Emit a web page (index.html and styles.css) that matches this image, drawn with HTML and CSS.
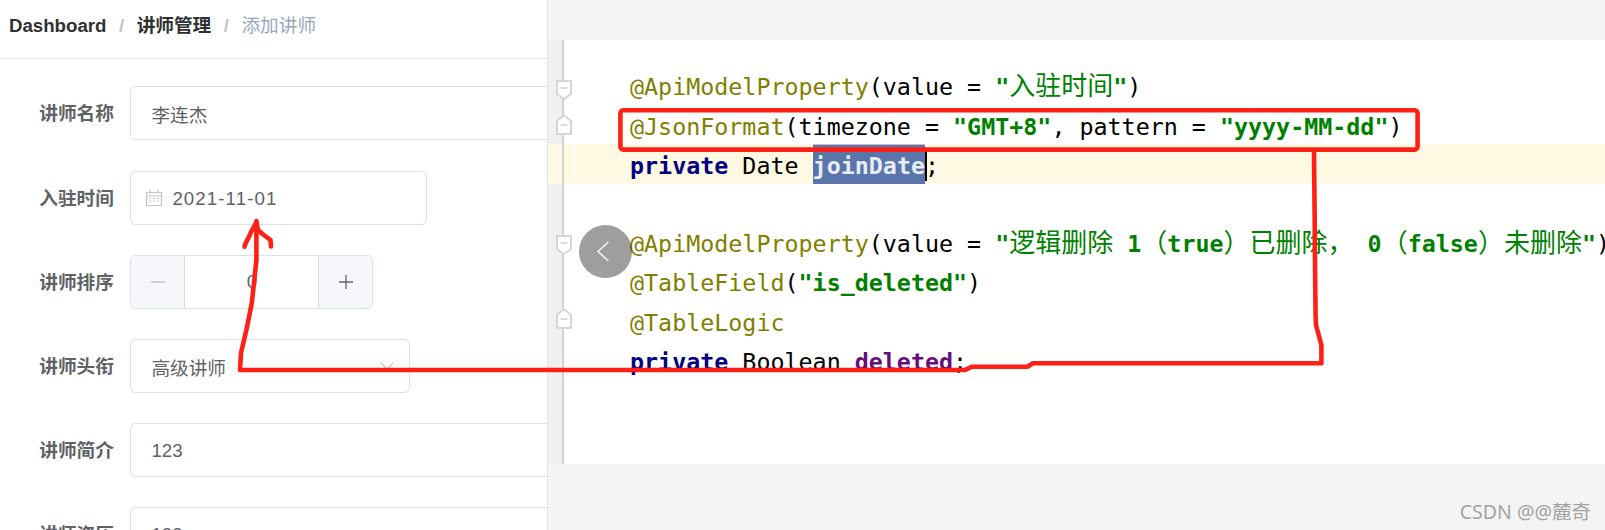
FILE: index.html
```html
<!DOCTYPE html>
<html lang="zh">
<head>
<meta charset="utf-8">
<title>添加讲师</title>
<link rel="stylesheet" href="styles.css">
</head>
<body>
<div class="page">
  <section class="admin">
    <nav class="crumbs">
      <span class="crumb">Dashboard</span><span class="sep">/</span>
      <span class="crumb">讲师管理</span><span class="sep">/</span>
      <span class="crumb current">添加讲师</span>
    </nav>
    <form class="form">
      <div class="row"><span class="label">讲师名称</span><div class="field wide">李连杰</div></div>
      <div class="row"><span class="label">入驻时间</span><div class="field date">
        <svg class="cal" viewBox="0 0 18 18" width="18" height="18"><path d="M1.5 3.5h15v13h-15zM1.5 7h15M5 1v3.5M13 1v3.5" fill="none" stroke="#c0c4cc" stroke-width="1.2"/><path d="M4 9.5h2M8 9.5h2M12 9.5h2M4 12h2M8 12h2M12 12h2" stroke="#c0c4cc" stroke-width="1.2"/></svg>
        <span class="date-text">2021-11-01</span></div></div>
      <div class="row"><span class="label">讲师排序</span><div class="number">
        <span class="step minus"><svg viewBox="0 0 16 16" width="16" height="16"><path d="M1 8h14" stroke="#c0c4cc" stroke-width="1.3"/></svg></span>
        <span class="num">0</span>
        <span class="step plus"><svg viewBox="0 0 16 16" width="16" height="16"><path d="M1 8h14M8 1v14" stroke="#606266" stroke-width="1.3"/></svg></span>
      </div></div>
      <div class="row"><span class="label">讲师头衔</span><div class="field select"><span>高级讲师</span>
        <svg class="arrow" viewBox="0 0 14 8" width="14" height="8"><path d="M.5.5 7 7 13.5.5" fill="none" stroke="#c0c4cc" stroke-width="1.2"/></svg></div></div>
      <div class="row"><span class="label">讲师简介</span><div class="field wide"><span class="digits">123</span></div></div>
      <div class="row"><span class="label">讲师资历</span><div class="field wide"><span class="digits">123</span></div></div>
    </form>
  </section>
  <section class="shot">
    <div class="editor">
      <div class="line"><span class="ann">@ApiModelProperty</span>(value = <span class="str">"<span class="cn">入驻时间</span>"</span>)</div>
      <div class="line"><span class="ann">@JsonFormat</span>(timezone = <span class="str">"GMT+8"</span>, pattern = <span class="str">"yyyy-MM-dd"</span>)</div>
      <div class="line active"><span class="kw">private</span> Date <span class="sel">joinDate</span>;</div>
      <div class="line"> </div>
      <div class="line"><span class="ann">@ApiModelProperty</span>(value = <span class="str">"<span class="cn">逻辑删除</span> 1<span class="cn">（</span>true<span class="cn">）已删除，</span> 0<span class="cn">（</span>false<span class="cn">）未删除</span>"</span>)</div>
      <div class="line"><span class="ann">@TableField</span>(<span class="str">"is_deleted"</span>)</div>
      <div class="line"><span class="ann">@TableLogic</span></div>
      <div class="line"><span class="kw">private</span> Boolean <span class="field-name">deleted</span>;</div>
      <svg class="gutter" viewBox="0 0 30 424" width="30" height="424">
        <path d="M15 0v424" stroke="#d2d2d2" stroke-width="2"/>
        <path d="M26 104v39" stroke="#fff" stroke-width="1"/>
        <g fill="#fff" stroke="#d6d6d6" stroke-width="2">
          <path d="M9 41h14v13l-7 5-7-5z"/>
          <path d="M9 94V81l7-6 7 6v13z"/>
          <path d="M9 196h14v13l-7 5-7-5z"/>
          <path d="M9 288v-13l7-6 7 6v13z"/>
        </g>
        <path d="M12.5 48h7M12.5 85h7M12.5 203h7M12.5 279h7" stroke="#d0d0d0" stroke-width="1.5"/>
      </svg>
    </div>
    <div class="footer"><span class="mark">CSDN @@麓奇</span></div>
  </section>
  <button class="back" type="button" aria-label="返回">
    <svg viewBox="0 0 14 21" width="14" height="21"><path d="M12.5 1 2 10.5 12.5 20" fill="none" stroke="#f4f4f4" stroke-width="1.6"/></svg>
  </button>
  <svg class="ink" viewBox="0 0 1605 530" width="1605" height="530">
    <rect x="620.4" y="110.2" width="797.2" height="39.4" rx="3"/>
    <path d="M1314 153 1314.6 210 1315 263 1315.6 316 1316 325 1321.4 345V363.3H1033L1027.5 366.7H972L965 370H240L241 353 246.4 330 251.8 303 254 283 256.4 260V221"/>
    <path d="M244.6 246.7C245 243 249 238 251 232L256.4 222 258 230 262.5 234 270.5 240 271 246.5"/>
  </svg>
</div>
</body>
</html>
```
FILE: styles.css
```css
* { box-sizing: border-box; }
html, body { margin: 0; height: 100%; }
body { overflow: hidden; background: #fff; }
.page {
  position: relative;
  display: flex;
  width: 1605px;
  height: 530px;
  overflow: hidden;
  font-family: "Liberation Sans", "Noto Sans CJK SC", sans-serif;
}
.admin {
  flex: 0 0 548px;
  overflow: hidden;
  background: #fff;
  border-right: 1px solid #e3e3e3;
  color: #606266;
  font-size: 18.67px;
}
.crumbs {
  display: flex;
  align-items: baseline;
  height: 59px;
  padding: 10px 0 0 9px;
  border-bottom: 1px solid #e0e2e8;
  white-space: nowrap;
}
.crumb { color: #303133; font-weight: 700; }
.crumb.current { color: #97a8be; font-weight: 400; }
.sep { margin: 0 12.5px; color: #c0c4cc; font-weight: 700; }
.form { padding-top: 27.3px; }
.row { display: flex; align-items: center; height: 54px; margin-bottom: 30px; }
.row:first-child { margin-bottom: 31px; }
.label {
  flex: 0 0 130.4px;
  padding: 0 16.5px 4px 0;
  text-align: right;
  font-weight: 700;
  white-space: nowrap;
}
.field {
  display: flex;
  align-items: center;
  height: 54px;
  padding: 0 20px;
  background: #fff;
  border: 1px solid #dcdfe6;
  border-radius: 5.3px;
  flex: none;
}
.wide { width: 460px; }
.date { width: 296.5px; padding-left: 14px; }
.cal { margin-right: 9px; flex: none; }
.date-text { letter-spacing: 1.1px; padding-top: 2px; }
.digits { padding-top: 2px; }
.select { width: 280px; justify-content: space-between; padding-right: 15px; }
.number {
  display: flex;
  width: 243px;
  height: 54px;
  border: 1px solid #dcdfe6;
  border-radius: 5.3px;
  overflow: hidden;
  flex: none;
}
.step {
  display: flex;
  align-items: center;
  justify-content: center;
  flex: 0 0 54px;
  background: #f5f7fa;
}
.minus { border-right: 1px solid #dcdfe6; }
.plus { border-left: 1px solid #dcdfe6; }
.num { flex: 1; text-align: center; line-height: 52px; }
.shot {
  flex: 1;
  display: flex;
  flex-direction: column;
  padding-top: 40px;
  background: #f4f4f4;
  min-width: 0;
}
.editor {
  position: relative;
  flex: 0 0 424px;
  padding-top: 26px;
  background: linear-gradient(to right, #f0f0f0 15px, #fff 15px);
  color: #000;
  font-family: "DejaVu Sans Mono", monospace;
  font-size: 23.33px;
}
.line { height: 39.2px; line-height: 39.2px; padding: 2.4px 0 0 82px; white-space: pre; }
.active { background: #fff9e3; }
.ann { color: #808000; }
.str { color: #008000; font-weight: 700; }
.kw { color: #000080; font-weight: 700; }
.field-name { color: #660e7a; font-weight: 700; }
.cn {
  font-family: "Noto Sans CJK SC", sans-serif;
  font-size: 26px;
  font-weight: 400;
  line-height: 1;
}
.sel {
  position: relative;
  display: inline-block;
  height: 36.8px;
  background: #5a75a9;
  box-shadow: 0 -2.4px 0 #5a75a9;
  color: #e8edf5;
  font-weight: 700;
}
.sel::after {
  content: "";
  position: absolute;
  top: 5px;
  right: -2px;
  width: 2px;
  height: 29px;
  background: #000;
}
.gutter { position: absolute; left: 0; top: 0; }
.footer {
  flex: 1;
  display: flex;
  justify-content: flex-end;
  padding: 36px 14px 0 0;
}
.mark {
  color: #a3a3a3;
  font-family: "Noto Sans", "Noto Sans CJK SC", sans-serif;
  font-size: 19.5px;
  line-height: 24px;
  white-space: nowrap;
}
.back {
  position: absolute;
  left: 579px;
  top: 225px;
  display: flex;
  align-items: center;
  justify-content: center;
  width: 53px;
  height: 53px;
  padding: 0 5px 0 0;
  border: 0;
  border-radius: 50%;
  background: rgba(0, 0, 0, .38);
}
.ink {
  position: absolute;
  left: 0;
  top: 0;
  fill: none;
  stroke: #ff2015;
  stroke-width: 4.6;
  stroke-linejoin: round;
  stroke-linecap: round;
}
```
